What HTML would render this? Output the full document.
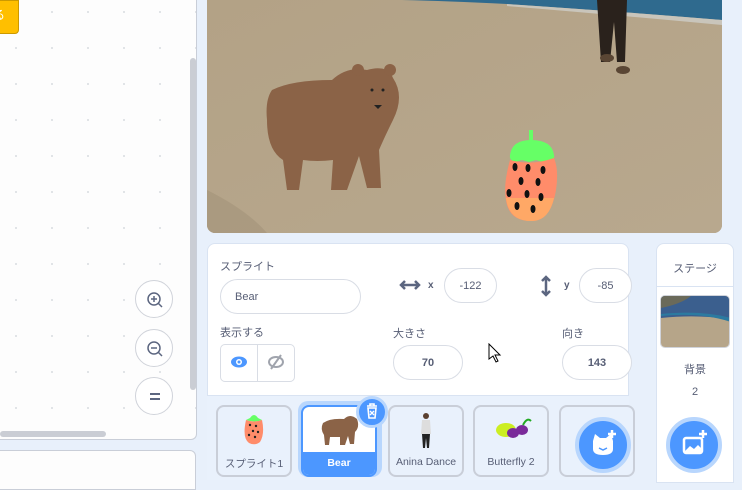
<!DOCTYPE html>
<html><head><meta charset="utf-8"><style>
*{box-sizing:border-box;margin:0;padding:0}
body{width:742px;height:480px;overflow:hidden;background:#e8f0fb;font-family:"Liberation Sans","Noto Sans CJK JP",sans-serif;position:relative;color:#575e75}
.abs{position:absolute}
.field{position:absolute;border:1px solid #d9dde5;border-radius:20px;background:#fff;font-size:11px;color:#575e75;display:flex;align-items:center;justify-content:center}
.lbl{position:absolute;font-size:11px;color:#575e75}
.spr{position:absolute;top:405px;width:76px;height:72px;border:2px solid #c9ced8;border-radius:8px;background:#e9f1fc;font-size:10.5px;text-align:center}
</style></head><body>
<div class="abs" style="left:0;top:0;width:197px;height:440px;background:#fdfdfd;border:1px solid #c9ced8;border-left:none;border-top:none;border-radius:0 0 6px 0;
background-image:radial-gradient(circle,#d8dbe0 0.8px,transparent 1px);background-size:36px 36px;background-position:-2px -6px"></div>
<div class="abs" style="left:-8px;top:0;width:27px;height:34px;background:#ffbf00;border-radius:0 0 4px 0;border:1px solid #cc9900;color:#fff;font-size:12px;line-height:14px;padding:7px 0 0 0;white-space:nowrap;overflow:hidden">る</div>
<div class="abs" style="left:190px;top:58px;width:6px;height:332px;background:#cacdd4;border-radius:3px"></div>
<div class="abs" style="left:0;top:431px;width:106px;height:6px;background:#cacdd4;border-radius:3px"></div>
<div class="abs" style="left:135px;top:280px;width:38px;height:38px;border:1.5px solid #d0d3da;border-radius:50%;background:#fff"><svg width="38" height="38" viewBox="0 0 38 38"><circle cx="18" cy="18" r="6" fill="none" stroke="#5c6680" stroke-width="1.5"/><path d="M22 22l4 4M18 15v6M15 18h6" stroke="#5c6680" stroke-width="1.5"/></svg></div>
<div class="abs" style="left:135px;top:329px;width:38px;height:38px;border:1.5px solid #d0d3da;border-radius:50%;background:#fff"><svg width="38" height="38" viewBox="0 0 38 38"><circle cx="18" cy="18" r="6" fill="none" stroke="#5c6680" stroke-width="1.5"/><path d="M22 22l4 4M15 18h6" stroke="#5c6680" stroke-width="1.5"/></svg></div>
<div class="abs" style="left:135px;top:377px;width:38px;height:38px;border:1.5px solid #d0d3da;border-radius:50%;background:#fff"><svg width="38" height="38" viewBox="0 0 38 38"><path d="M14 16h10M14 21h10" stroke="#5c6680" stroke-width="2"/></svg></div>
<div class="abs" style="left:0;top:450px;width:196px;height:40px;background:#fdfdfd;border:1px solid #c9ced8;border-left:none;border-radius:0 6px 0 0"></div>
<div class="abs" style="left:207px;top:0;width:515px;height:233px;border-radius:0 0 8px 8px;overflow:hidden;background:#b5a488">
<svg width="515" height="233" viewBox="0 0 515 233">
<defs><linearGradient id="sg" x1="0" y1="0" x2="1" y2="1"><stop offset="0" stop-color="#b3a286"/><stop offset="1" stop-color="#b8a88e"/></linearGradient></defs>
<rect width="515" height="233" fill="url(#sg)"/>
<path d="M195 0H515V20Q420 12 300 4Q240 1 195 0Z" fill="#2f6a8e"/>
<path d="M300 4Q420 12 515 20V25Q420 16 300 6Z" fill="#c9c5bb"/>
<path d="M0 190Q40 210 60 233H0Z" fill="#a09075" opacity=".5"/>
<path d="M390 0h30l-2 62h-8l-3-40-4 40h-9z" fill="#2a221c"/>
<ellipse cx="400" cy="58" rx="7" ry="4" fill="#5a4634"/><ellipse cx="416" cy="70" rx="7" ry="4" fill="#5a4634"/>
<path d="M65 90Q85 80 125 80Q140 66 160 70Q180 64 186 78Q198 96 186 120Q178 136 172 150L174 188H160L152 156L140 190H124L126 160Q110 162 96 160L92 190H80L76 160Q60 150 60 120Q58 100 65 90Z" fill="#8b6347"/>
<circle cx="151" cy="70" r="6" fill="#8b6347"/><circle cx="183" cy="70" r="6" fill="#8b6347"/>
<circle cx="165" cy="90" r="1.5" fill="#222"/><circle cx="176" cy="90" r="1.5" fill="#222"/><path d="M167 105h8l-4 4z" fill="#222"/>
<path d="M322 130h4v12h-4z" fill="#66ff66"/>
<path d="M303 155Q305 140 324 140Q345 140 347 155Q348 160 343 160L336 162L329 160L322 162L315 160L308 162Q302 160 303 155Z" fill="#66ff66"/>
<path d="M303 160Q296 185 299 200Q302 222 326 221Q344 220 349 190Q352 170 347 158Q325 166 303 160Z" fill="#ff8c6a"/>
<path d="M299 198Q302 222 326 221Q342 220 347 198Z" fill="#ffa866"/>
<g fill="#111"><ellipse cx="308" cy="167" rx="2.5" ry="4"/><ellipse cx="321" cy="168" rx="2.5" ry="4"/><ellipse cx="336" cy="170" rx="2.5" ry="4"/><ellipse cx="314" cy="181" rx="2.5" ry="4"/><ellipse cx="331" cy="182" rx="2.5" ry="4"/><ellipse cx="302" cy="193" rx="2.5" ry="4"/><ellipse cx="320" cy="194" rx="2.5" ry="4"/><ellipse cx="334" cy="197" rx="2.5" ry="4"/><ellipse cx="310" cy="206" rx="2.5" ry="4"/><ellipse cx="326" cy="209" rx="2.5" ry="4"/></g>
</svg></div>
<div class="abs" style="left:207px;top:243px;width:422px;height:237px;background:#fff;border:1px solid #d9e3f2;border-radius:8px 8px 0 0"></div>
<div class="abs" style="left:207px;top:395px;width:422px;height:85px;background:#e9f1fc;border-top:1px solid #d9e3f2"></div>
<div class="lbl" style="left:220px;top:258px">スプライト</div>
<div class="field" style="left:220px;top:279px;width:141px;height:35px;justify-content:flex-start;padding-left:14px">Bear</div>
<svg class="abs" style="left:399px;top:278px" width="22" height="14" viewBox="0 0 22 14"><path d="M2 7h18M6 3L2 7l4 4M16 3l4 4-4 4" stroke="#5c6680" stroke-width="2.5" fill="none"/></svg>
<div class="lbl" style="left:428px;top:280px;font-weight:bold;font-size:10px">x</div>
<div class="field" style="left:444px;top:268px;width:53px;height:35px">-122</div>
<svg class="abs" style="left:539px;top:275px" width="14" height="22" viewBox="0 0 14 22"><path d="M7 2v18M3 6l4-4 4 4M3 16l4 4 4-4" stroke="#5c6680" stroke-width="2.5" fill="none"/></svg>
<div class="lbl" style="left:564px;top:280px;font-weight:bold;font-size:10px">y</div>
<div class="field" style="left:579px;top:268px;width:53px;height:35px">-85</div>
<div class="lbl" style="left:220px;top:324px">表示する</div>
<div class="abs" style="left:220px;top:344px;width:75px;height:38px;border:1px solid #d9dde5;border-radius:5px;background:#fff"></div>
<div class="abs" style="left:257px;top:344px;width:1px;height:38px;background:#d9dde5"></div>
<svg class="abs" style="left:230px;top:355px" width="18" height="14" viewBox="0 0 18 14"><ellipse cx="9" cy="7" rx="8" ry="5.5" fill="#4c97ff"/><circle cx="9" cy="7" r="3" fill="#fff"/><circle cx="9" cy="7" r="1.5" fill="#4c97ff"/></svg>
<svg class="abs" style="left:267px;top:354px" width="18" height="16" viewBox="0 0 18 16"><ellipse cx="9" cy="8" rx="7" ry="5" fill="none" stroke="#a0a4ad" stroke-width="2"/><path d="M14 1L4 15" stroke="#a0a4ad" stroke-width="2"/></svg>
<div class="lbl" style="left:393px;top:325px">大きさ</div>
<div class="field" style="left:393px;top:345px;width:70px;height:35px;font-weight:bold">70</div>
<div class="lbl" style="left:562px;top:325px">向き</div>
<div class="field" style="left:562px;top:345px;width:70px;height:35px;font-weight:bold">143</div>
<svg class="abs" style="left:488px;top:343px" width="14" height="20" viewBox="0 0 14 20"><path d="M1 1v15l4-3 3 6 2-1-3-6h5z" fill="#fff" stroke="#000" stroke-width="1"/></svg>
<div class="spr" style="left:216px"><svg class="abs" style="left:23px;top:3px" width="26" height="36" viewBox="0 0 26 36"><path d="M9 8Q13 2 17 8L21 10Q14 13 5 10Z" fill="#66ff66"/><path d="M5 10Q1 28 8 33Q14 36 19 32Q24 24 21 10Q13 13 5 10Z" fill="#ff8c6a"/><g fill="#222"><circle cx="9" cy="15" r="1.2"/><circle cx="15" cy="16" r="1.2"/><circle cx="12" cy="21" r="1.2"/><circle cx="17" cy="22" r="1.2"/><circle cx="8" cy="25" r="1.2"/><circle cx="14" cy="27" r="1.2"/></g></svg><div class="abs" style="left:0;right:0;top:49px">スプライト1</div></div>
<div class="abs" style="left:298px;top:401px;width:84px;height:76px;border-radius:10px;background:#b8d6fd"></div>
<div class="spr" style="left:301px;border-color:#4c97ff;background:#fff;overflow:hidden"><svg class="abs" style="left:17px;top:6px" width="40" height="34" viewBox="0 0 40 34"><path d="M3 10Q10 5 24 6Q30 0 37 6Q40 14 35 19L34 31H30L28 23L25 32H20L20 24H10L9 32H5L4 22Q0 16 3 10Z" fill="#8b6347"/></svg><div class="abs" style="left:0;right:0;bottom:0;height:23px;background:#4c97ff;color:#fff;font-weight:bold;padding-top:5px">Bear</div></div>
<div class="abs" style="left:356px;top:396px;width:32px;height:32px;border-radius:50%;background:#4c97ff;border:3px solid #b8d6fd"><svg width="26" height="26" viewBox="0 0 26 26"><path d="M8 7h10M11 7V5h4v2M9 9h8l-1 10h-6z" fill="none" stroke="#fff" stroke-width="1.6"/><path d="M11 12l4 4M15 12l-4 4" stroke="#fff" stroke-width="1.3"/></svg></div>
<div class="spr" style="left:388px"><svg class="abs" style="left:28px;top:5px" width="16" height="38" viewBox="0 0 16 38"><circle cx="8" cy="4" r="3" fill="#5a4030"/><path d="M4 8h8l1 14H3z" fill="#ddd"/><path d="M4 22h8l-1 14H9L8 26 7 36H5z" fill="#222"/></svg><div class="abs" style="left:0;right:0;top:49px">Anina Dance</div></div>
<div class="spr" style="left:473px"><svg class="abs" style="left:18px;top:8px" width="40" height="28" viewBox="0 0 40 28"><ellipse cx="13" cy="15" rx="10" ry="7" fill="#ccee22"/><ellipse cx="20" cy="18" rx="6" ry="5" fill="#7a2a9a"/><ellipse cx="29" cy="15" rx="6" ry="5" fill="#7a2a9a"/><path d="M30 10Q34 2 38 6" stroke="#22aa22" stroke-width="2" fill="none"/></svg><div class="abs" style="left:0;right:0;top:49px">Butterfly 2</div></div>
<div class="spr" style="left:559px"></div>
<div class="abs" style="left:575px;top:417px;width:56px;height:56px;border-radius:50%;background:#4c97ff;border:4px solid #b8d6fd"><svg width="48" height="48" viewBox="0 0 48 48"><path d="M14 20l2-7 5 4h6l5-4 2 7v8q0 6-10 6t-10-6z" fill="#fff"/><path d="M20 27l4 2 4-2" stroke="#4c97ff" stroke-width="1.5" fill="none"/><path d="M33 9v8M29 13h8" stroke="#fff" stroke-width="2.5"/></svg></div>
<div class="abs" style="left:656px;top:243px;width:78px;height:240px;background:#fff;border:1px solid #d9e3f2;border-radius:8px 8px 0 0"></div>
<div class="abs" style="left:656px;top:286px;width:78px;height:1px;background:#d9e3f2"></div>
<div class="lbl" style="left:656px;top:260px;width:78px;text-align:center">ステージ</div>
<div class="abs" style="left:660px;top:295px;width:70px;height:53px;border-radius:5px;overflow:hidden;border:1px solid #d0d3da"><svg width="70" height="53" viewBox="0 0 70 53"><rect width="70" height="53" fill="#b6a589"/><path d="M0 0H70V24Q40 18 0 22Z" fill="#3b5f8e"/><path d="M0 0H30Q20 8 0 12Z" fill="#6a6a5a"/><path d="M0 20Q40 16 70 26V22Q40 14 0 18Z" fill="#2c7aa0"/></svg></div>
<div class="lbl" style="left:656px;top:361px;width:78px;text-align:center">背景</div>
<div class="lbl" style="left:656px;top:386px;width:78px;text-align:center">2</div>
<div class="abs" style="left:666px;top:417px;width:56px;height:56px;border-radius:50%;background:#4c97ff;border:4px solid #b8d6fd"><svg width="48" height="48" viewBox="0 0 48 48"><rect x="14" y="17" width="18" height="15" rx="2" fill="none" stroke="#fff" stroke-width="2.5"/><path d="M15 30l5-5 4 3 4-4 3 3v4H15z" fill="#fff"/><path d="M33 9v8M29 13h8" stroke="#fff" stroke-width="2.5"/></svg></div>
</body></html>
